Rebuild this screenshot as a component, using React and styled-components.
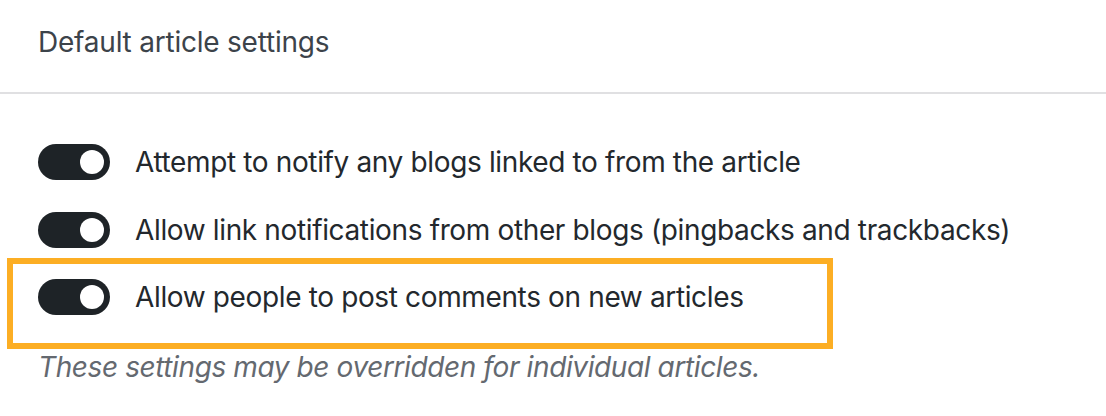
import React from "react";
import styled, { createGlobalStyle } from "styled-components";

const GlobalStyle = createGlobalStyle`
  html, body { margin: 0; padding: 0; background: #ffffff; }
  body {
    font-family: Inter, "Noto Sans", "Liberation Sans", sans-serif;
    -webkit-font-smoothing: antialiased;
  }
`;

const Panel = styled.section`
  width: 1106px;
  height: 416px;
  background: #ffffff;
  overflow: hidden;
`;

const Header = styled.header`
  padding: 24px 38px 32px;
  border-bottom: 2px solid #e0e0e2;
`;

const Title = styled.h2`
  margin: 0;
  font-size: 28px;
  line-height: 36px;
  font-weight: 400;
  letter-spacing: -0.22px;
  color: #3c434a;
`;

const Body = styled.div`
  padding: 50px 38px 0;
  display: flex;
  flex-direction: column;
`;

const Row = styled.label`
  display: flex;
  align-items: center;
  gap: 25px;
  height: 36px;
  margin-bottom: ${(p) => (p.$last ? "0" : "31.65px")};
  cursor: pointer;
`;

const Track = styled.span`
  position: relative;
  flex: 0 0 auto;
  width: 72px;
  height: 36px;
  border-radius: 18px;
  background: ${(p) => (p.$on ? "#1e2327" : "#ffffff")};
  box-sizing: border-box;
  border: ${(p) => (p.$on ? "none" : "2px solid #1e2327")};
`;

const Knob = styled.span`
  position: absolute;
  top: 6px;
  left: ${(p) => (p.$on ? "42px" : "6px")};
  width: 24px;
  height: 24px;
  border-radius: 50%;
  background: ${(p) => (p.$on ? "#ffffff" : "#1e2327")};
`;

const Label = styled.span`
  font-size: 28px;
  line-height: 36px;
  letter-spacing: -0.36px;
  color: #23282d;
  white-space: nowrap;
`;

const Highlight = styled.div`
  box-sizing: border-box;
  width: 826px;
  margin: 10.3px 0 0 -31px;
  padding: 15.3px 0 27.7px 25px;
  border: 6px solid #fcae24;
`;

const Note = styled.p`
  margin: 0;
  font-size: 28px;
  line-height: 36px;
  font-style: italic;
  letter-spacing: -0.4px;
  color: #646970;
  white-space: nowrap;
`;

function Toggle({ on = true }) {
  return (
    <Track $on={on} role="switch" aria-checked={on}>
      <Knob $on={on} />
    </Track>
  );
}

function SettingRow({ label, last }) {
  return (
    <Row $last={last}>
      <Toggle on />
      <Label>{label}</Label>
    </Row>
  );
}

export default function App() {
  return (
    <Panel>
      <GlobalStyle />
      <Header>
        <Title>Default article settings</Title>
      </Header>
      <Body>
        <SettingRow label="Attempt to notify any blogs linked to from the article" />
        <SettingRow label="Allow link notifications from other blogs (pingbacks and trackbacks)" last />
        <Highlight>
          <SettingRow label="Allow people to post comments on new articles" last />
        </Highlight>
        <Note>These settings may be overridden for individual articles.</Note>
      </Body>
    </Panel>
  );
}
